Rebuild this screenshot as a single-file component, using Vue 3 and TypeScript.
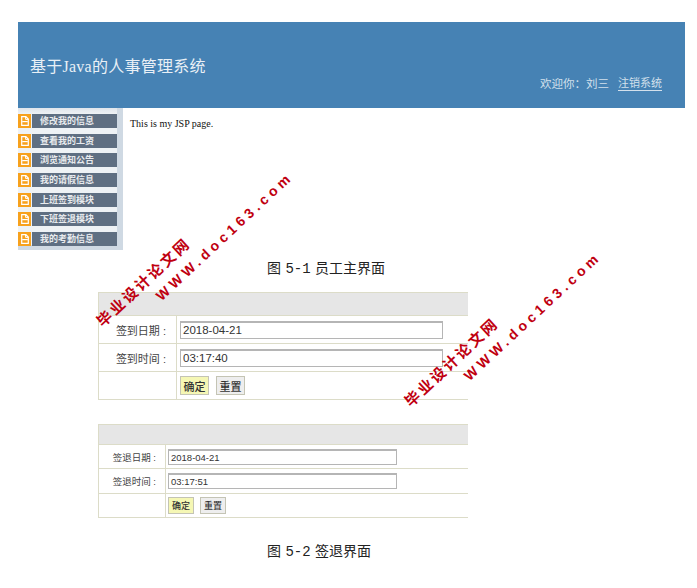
<script setup lang="ts">
const menu: string[] = ['修改我的信息', '查看我的工资', '浏览通知公告', '我的请假信息', '上班签到模块', '下班签退模块', '我的考勤信息']
const marks = [
  { id: 1, x: 117, y: 279 },
  { id: 2, x: 425, y: 359 },
]
</script>

<template>
  <div class="page">
    <header class="banner">
      <h1 class="title">基于Java的人事管理系统</h1>
      <div class="user">
        <span>欢迎你：刘三</span>
        <a class="logout">注销系统</a>
      </div>
    </header>

    <div class="main-row">
      <nav class="side">
        <div class="side-inner">
          <div v-for="m in menu" :key="m" class="item">
            <span class="ico">
              <svg width="8" height="10" viewBox="0 0 8 10">
                <path d="M.7.7h4.2L7.3 3v6.3H.7z" fill="none" stroke="#fff" stroke-width="1.2" />
                <path d="M4.6 1v2.4h2.6" fill="none" stroke="#fff" stroke-width="1" />
                <path d="M1.2 5.6h5.6" stroke="#fff" stroke-width="1.2" />
              </svg>
            </span>
            <span class="label">{{ m }}</span>
          </div>
        </div>
      </nav>
      <p class="jsp">This is my JSP page.</p>
    </div>

    <p class="caption first">图 5-1 员工主界面</p>

    <div class="form big">
      <div class="head"></div>
      <div class="row">
        <div class="key">签到日期 :</div>
        <div class="val"><span class="input">2018-04-21</span></div>
      </div>
      <div class="row">
        <div class="key">签到时间 :</div>
        <div class="val"><span class="input">03:17:40</span></div>
      </div>
      <div class="row">
        <div class="key"></div>
        <div class="val"><button class="btn ok">确定</button><button class="btn reset">重置</button></div>
      </div>
    </div>

    <div class="form small">
      <div class="head"></div>
      <div class="row">
        <div class="key">签退日期 :</div>
        <div class="val"><span class="input">2018-04-21</span></div>
      </div>
      <div class="row">
        <div class="key">签退时间 :</div>
        <div class="val"><span class="input">03:17:51</span></div>
      </div>
      <div class="row">
        <div class="key"></div>
        <div class="val"><button class="btn ok">确定</button><button class="btn reset">重置</button></div>
      </div>
    </div>

    <p class="caption second">图 5-2 签退界面</p>

    <div v-for="w in marks" :key="w.id" class="mark" :style="{ left: w.x + 'px', top: w.y - 107 + 'px' }">
      <div class="mark-cn">毕业设计论文网</div>
      <div class="mark-en">WWW.doc163.com</div>
    </div>
  </div>
</template>

<style>
html, body { margin: 0; background: #fff; }
</style>

<style scoped>
.page {
  position: relative;
  width: 697px;
  height: 588px;
  box-sizing: border-box;
  padding: 22px 0 0 18px;
  overflow: hidden;
  font-family: "Liberation Sans", "Noto Sans CJK SC", sans-serif;
  color: #333;
}
.banner {
  width: 667px;
  height: 86px;
  box-sizing: border-box;
  background: #4682b4;
  display: flex;
  justify-content: space-between;
  align-items: flex-start;
  padding: 36px 23px 0 12px;
}
.title {
  margin: 0;
  font: 400 16px/18px "Liberation Serif", "Noto Sans CJK SC", serif;
  letter-spacing: 0.25px;
  color: #e9f0f6;
}
.user {
  margin-top: 17px;
  display: flex;
  gap: 9px;
  font: 400 11.5px/16px "Noto Sans CJK SC", sans-serif;
  color: #d3e0ec;
}
.logout {
  font-size: 11px;
  border-bottom: 1px solid #d3e0ec;
  line-height: 14px;
  height: 14px;
  padding-bottom: 1px;
}
.main-row {
  display: flex;
  height: 142px;
}
.side {
  width: 105px;
  box-sizing: border-box;
  padding-right: 6px;
  background: #cfd9e3;
}
.side-inner {
  height: 137px;
  box-sizing: border-box;
  padding-top: 6px;
  background: linear-gradient(#dfe5eb, #eef2f5 6px);
  display: flex;
  flex-direction: column;
  gap: 5.7px;
}
.item {
  display: flex;
  height: 14px;
}
.ico {
  width: 13px;
  background: #f7a11d;
  display: flex;
  align-items: center;
  justify-content: center;
  margin-right: 1px;
}
.label {
  flex: 1;
  background: #5f6f82;
  color: #e8ebee;
  font: 700 9px/14px "Noto Sans CJK SC", sans-serif;
  padding-left: 8px;
}
.jsp {
  margin: 10px 0 0 7px;
  font: 400 10px/12px "Liberation Serif", serif;
  color: #111;
}
.caption {
  margin: 0 0 0 249px;
  font: 400 14px/18px "Liberation Mono", "Noto Sans CJK SC", monospace;
  word-spacing: -4px;
  color: #222;
}
.caption.first { margin-top: 10px; }
.caption.second { margin-top: 25px; }
.form {
  width: 370px;
  margin-left: 80px;
  border-left: 1px solid #dcdcc8;
  border-top: 1px solid #dcdcc8;
  box-sizing: border-box;
}
.form.big { margin-top: 14px; font-size: 11px; }
.form.small { margin-top: 24px; font-size: 9.5px; }
.head {
  background: #e6e6e6;
  border-bottom: 1px solid #dcdcc8;
}
.big .head { height: 22px; }
.small .head { height: 19px; }
.row {
  display: flex;
  border-bottom: 1px solid #dcdcc8;
  box-sizing: border-box;
}
.big .row { height: 28px; }
.small .row { height: 24.4px; }
.key {
  border-right: 1px solid #dcdcc8;
  box-sizing: border-box;
  display: flex;
  align-items: center;
  justify-content: flex-end;
  color: #444;
}
.big .key { width: 78px; padding-right: 10px; }
.small .key { width: 67px; padding-right: 9px; }
.val {
  flex: 1;
  display: flex;
  align-items: center;
  gap: 7px;
  padding-left: 3px;
}
.small .val { padding-left: 2px; }
.input {
  display: flex;
  align-items: center;
  box-sizing: border-box;
  border: 1px solid #b5b5b5;
  border-top-width: 2px;
  background: #fff;
  padding-left: 2px;
  color: #333;
}
.big .input { width: 263px; height: 18px; font-size: 11.5px; }
.small .input { width: 229px; height: 16px; font-size: 9.5px; }
.btn {
  box-sizing: border-box;
  border: 1px solid #c4c4b4;
  padding: 0;
  font-family: "Noto Sans CJK SC", sans-serif;
  color: #333;
  font-weight: 500;
}
.big .btn { width: 29px; height: 19px; font-size: 11px; }
.small .btn { width: 26px; height: 17px; font-size: 9px; }
.small .val { gap: 6px; }
.ok { background: #f5f7b4; }
.reset { background: #eeeeee; }
.mark {
  position: absolute;
  width: 210px;
  height: 64px;
  transform: rotate(-43deg);
  transform-origin: 0 100%;
  margin-top: 107px;
  color: #c00010;
  font-family: "Noto Sans CJK SC", sans-serif;
  font-weight: 700;
}
.mark-cn {
  font-size: 15px;
  line-height: 18px;
  letter-spacing: 2.4px;
  white-space: nowrap;
  margin-top: 28px;
}
.mark-en {
  font: 700 14px/18px "Liberation Sans", sans-serif;
  letter-spacing: 4.1px;
  white-space: nowrap;
  margin: 4px 0 0 61px;
}
</style>
